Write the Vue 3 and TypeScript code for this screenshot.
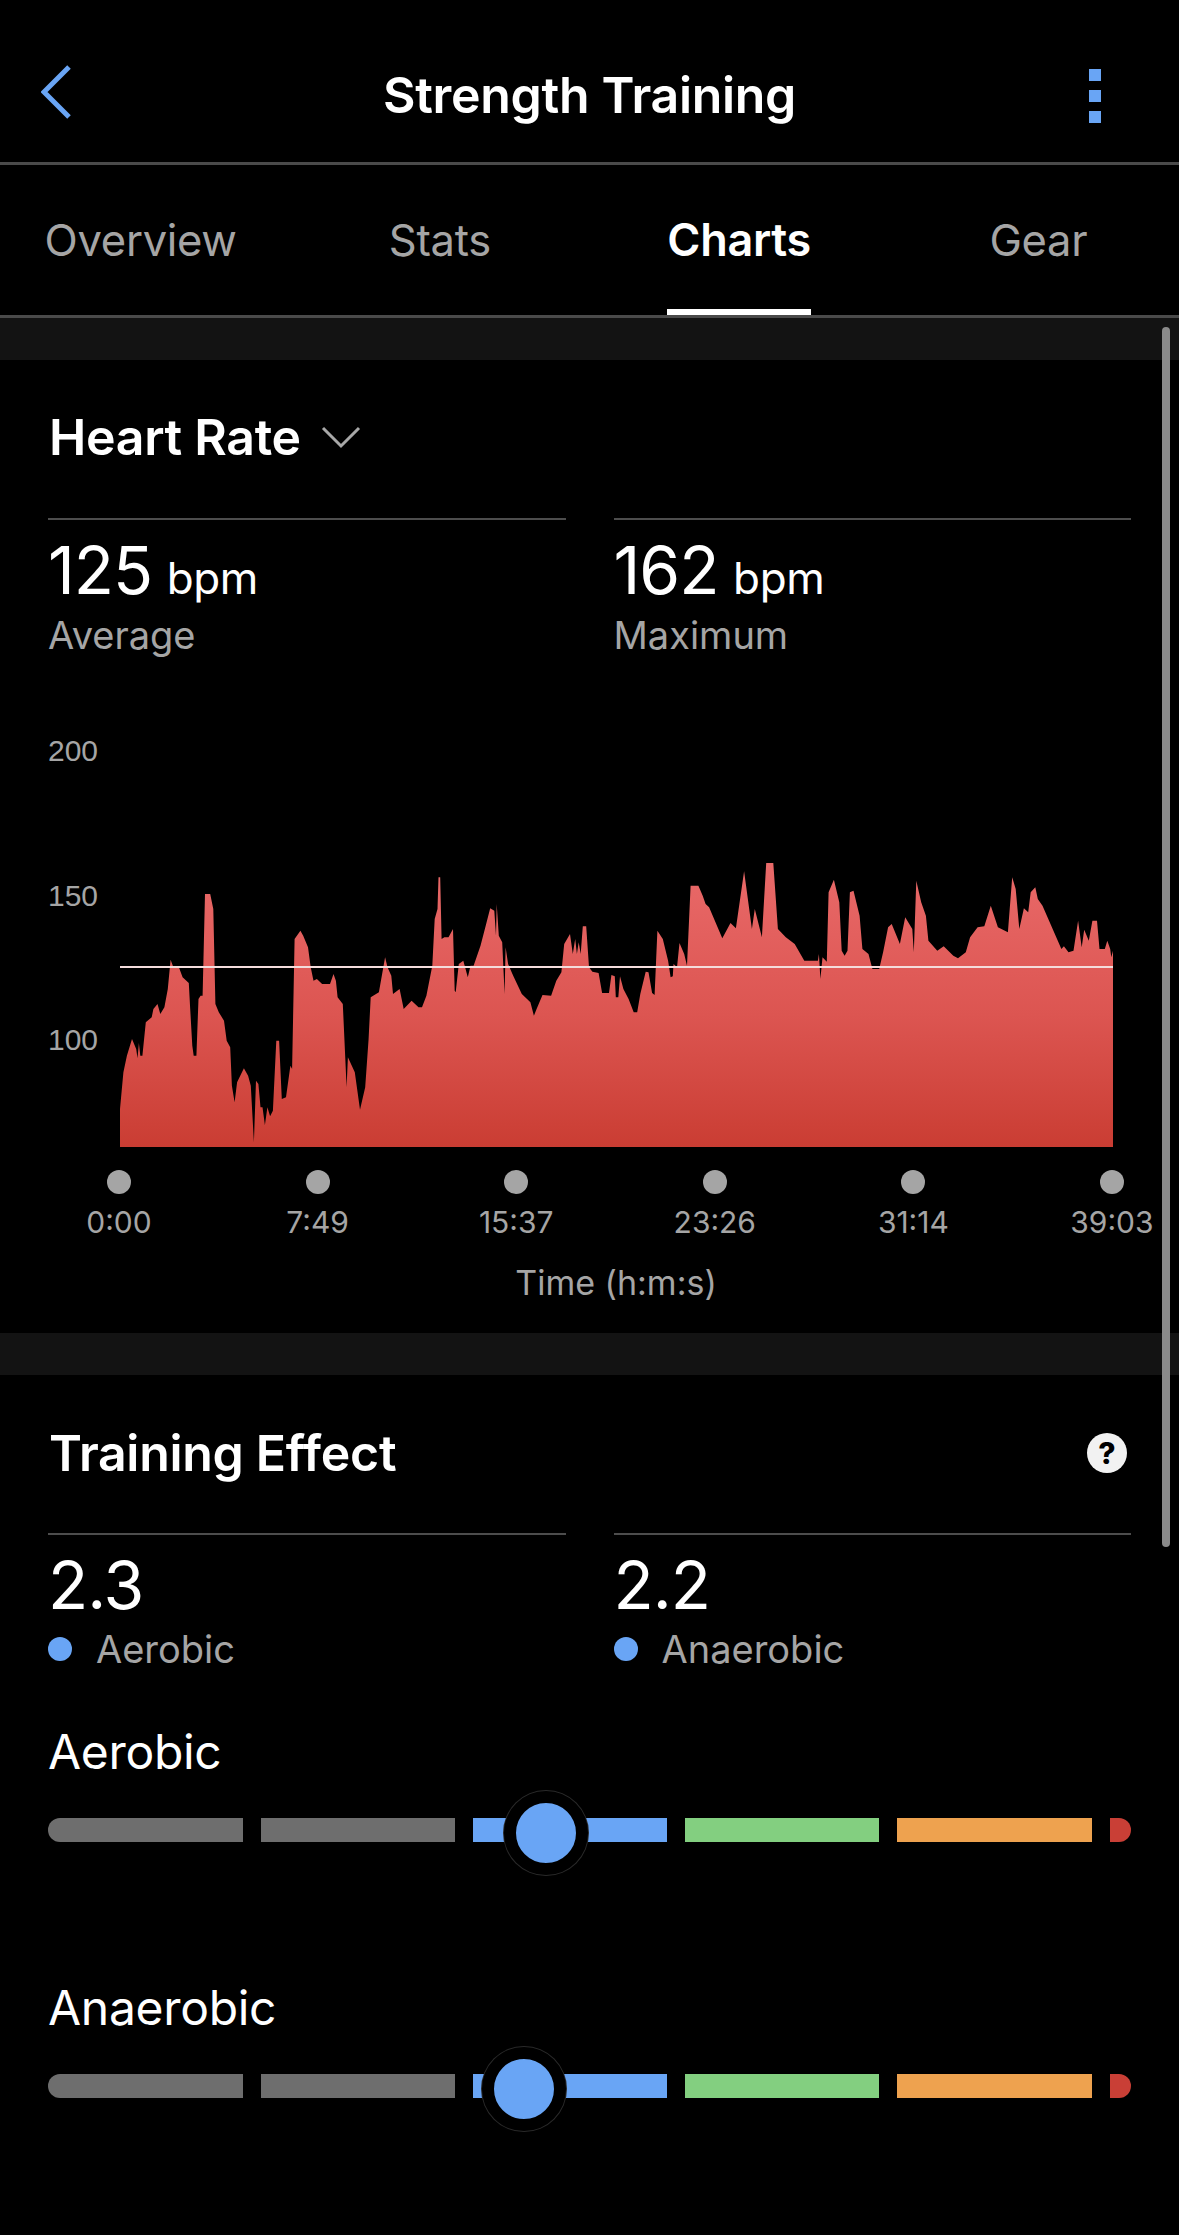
<script setup lang="ts">
type Zone = { color: string; width: number }

const TOP = 735
const BASE = 1148
const LEFT = 120

// outline traced from the chart: first run is x = 100 + zx / 2.904, second x = 620 + zx / 2.805
const runA: number[] = [
  58,810, 68,700, 78,650, 93,600, 105,630, 109,658, 113,612, 117,650, 123,650, 133,550, 150,535, 155,510,
  167,495, 175,525, 187,505, 197,450, 205,362, 212,382, 228,382, 240,415, 258,432, 262,510, 268,620, 272,650,
  280,650, 286,480, 292,470, 298,470, 305,165, 320,165, 329,210, 335,495, 345,520, 360,545, 368,605, 378,625,
  383,740, 391,790, 398,730, 418,688, 430,710, 438,740, 447,910, 453,725, 460,735, 466,805, 472,805, 479,858,
  486,805, 494,832, 502,815, 512,605, 520,605, 528,780, 540,775, 553,680, 558,690, 565,300, 582,275, 590,290,
  604,325, 612,385, 620,425, 630,420, 645,435, 668,435, 678,405, 685,425, 690,475, 705,495, 716,745, 720,655,
  740,700, 755,812, 770,745, 780,600, 786,475, 810,460, 828,355, 835,385, 846,410, 851,465, 870,450, 882,510,
  905,485, 925,505, 935,505, 948,470, 965,380, 972,240, 980,210, 983,115, 988,115, 992,300, 1000,295, 1012,295,
  1025,270, 1030,455, 1033,460, 1042,375, 1055,365, 1068,415, 1076,380, 1085,380, 1105,320, 1120,260, 1133,208,
  1145,215, 1150,290, 1152,195, 1158,290, 1168,310, 1172,400, 1175,465, 1178,325, 1185,375, 1200,410, 1225,465,
  1250,490, 1260,530, 1268,510, 1285,468, 1310,470, 1325,425, 1340,400, 1348,315, 1365,285, 1373,345, 1380,300,
  1385,345, 1390,310, 1396,345, 1402,262, 1412,262, 1420,385, 1430,398, 1448,402, 1458,462, 1478,462, 1485,408,
  1495,412, 1498,475, 1505,475, 1510,412, 1520,450, 1535,480, 1550,520, 1560,520,
]
const runB: number[] = [
  57,465, 72,398, 80,400, 90,462, 97,468, 105,275, 120,300, 135,365, 142,415, 148,412, 150,375, 160,385, 167,312,
  180,345, 188,380, 198,140, 220,140, 232,170, 240,195, 250,205, 287,298, 310,252, 325,268, 348,97, 370,270,
  378,210, 398,295, 410,72, 430,72, 443,270, 465,295, 490,315, 517,365, 555,365, 558,345, 562,420, 568,355,
  580,368, 585,160, 600,122, 615,190, 622,335, 630,350, 638,335, 645,160, 655,155, 672,230, 680,330, 697,345,
  708,390, 727,390, 738,340, 752,265, 762,255, 785,315, 800,235, 820,270, 824,340, 831,125, 845,190, 858,230,
  865,305, 890,335, 908,322, 935,350, 948,358, 970,340, 982,295, 1003,265, 1022,262, 1040,200, 1060,265, 1088,280,
  1100,115, 1110,150, 1120,270, 1133,208, 1145,220, 1152,160, 1165,145, 1172,180, 1185,200, 1238,330, 1245,322,
  1258,340, 1272,335, 1285,245, 1295,325, 1302,272, 1315,305, 1325,245, 1338,245, 1345,330, 1360,330, 1367,305,
  1375,330, 1378,355, 1383,335,
]

function trace(run: number[], origin: number, scale: number): string[] {
  const out: string[] = []
  for (let i = 0; i < run.length; i += 2) {
    const x = origin + run[i] / scale - LEFT
    const y = 840 + run[i + 1] / 3 - TOP
    out.push(`${x.toFixed(1)},${y.toFixed(1)}`)
  }
  return out
}

const chartH = BASE - TOP
const points = [...trace(runA, 100, 2.904), ...trace(runB, 620, 2.805)]
const area = `M0,${chartH} L${points.join(' L')} L993,${chartH} Z`
const avgY = 968 - TOP

const ticks = ['0:00', '7:49', '15:37', '23:26', '31:14', '39:03']
const yLabels = ['200', '150', '100']
const tabs = ['Overview', 'Stats', 'Charts', 'Gear']

const zones: Zone[] = [
  { color: '#6e6e6e', width: 194.5 },
  { color: '#6e6e6e', width: 194.5 },
  { color: '#69a5f5', width: 194 },
  { color: '#83cf80', width: 194 },
  { color: '#eea24f', width: 195 },
  { color: '#c93f36', width: 21 },
]
const gauges = [
  { label: 'Aerobic', thumb: 498 },
  { label: 'Anaerobic', thumb: 476 },
]
</script>

<template>
  <div class="screen">
    <header class="topbar">
      <svg class="back" width="30" height="54" viewBox="0 0 30 54" fill="none">
        <path d="M28 2 L3 27 L28 52" stroke="#69a5f5" stroke-width="5" />
      </svg>
      <h1>Strength Training</h1>
      <div class="kebab"><i></i><i></i><i></i></div>
    </header>

    <nav class="tabs">
      <div v-for="t in tabs" :key="t" class="tab" :class="{ active: t === 'Charts' }">
        <span>{{ t }}</span>
      </div>
    </nav>

    <div class="band"></div>

    <section class="hr">
      <div class="title-row">
        <h2>Heart Rate</h2>
        <svg width="40" height="24" viewBox="0 0 40 24" fill="none">
          <path d="M2 3 L20 21 L38 3" stroke="#a8a8a8" stroke-width="3" />
        </svg>
      </div>

      <div class="stats">
        <div class="stat">
          <div class="value">125 <small>bpm</small></div>
          <div class="caption">Average</div>
        </div>
        <div class="stat">
          <div class="value">162 <small>bpm</small></div>
          <div class="caption">Maximum</div>
        </div>
      </div>

      <div class="plot">
        <div class="yaxis">
          <span v-for="y in yLabels" :key="y">{{ y }}</span>
        </div>
        <svg :width="993" :height="chartH" :viewBox="`0 0 993 ${chartH}`">
          <defs>
            <linearGradient id="hrFill" x1="0" y1="120" x2="0" :y2="chartH" gradientUnits="userSpaceOnUse">
              <stop offset="0" stop-color="#ea6b6b" />
              <stop offset="0.55" stop-color="#dc5551" />
              <stop offset="1" stop-color="#ca3d33" />
            </linearGradient>
          </defs>
          <path :d="area" fill="url(#hrFill)" />
          <line x1="0" x2="993" :y1="avgY" :y2="avgY" stroke="#f4dcdc" stroke-width="2" />
        </svg>
      </div>

      <div class="xaxis">
        <div v-for="t in ticks" :key="t" class="tick">
          <i></i>
          <span>{{ t }}</span>
        </div>
      </div>
      <div class="axis-title">Time (h:m:s)</div>
    </section>

    <div class="band"></div>

    <section class="te">
      <div class="title-row between">
        <h2>Training Effect</h2>
        <span class="help">?</span>
      </div>

      <div class="stats effect">
        <div class="stat">
          <div class="value">2.3</div>
          <div class="caption dot">Aerobic</div>
        </div>
        <div class="stat">
          <div class="value">2.2</div>
          <div class="caption dot">Anaerobic</div>
        </div>
      </div>

      <div v-for="g in gauges" :key="g.label" class="gauge">
        <div class="gauge-label">{{ g.label }}</div>
        <div class="track">
          <div
            v-for="(z, i) in zones"
            :key="i"
            class="zone"
            :style="{ background: z.color, width: z.width + 'px' }"
          ></div>
          <div class="thumb" :style="{ left: g.thumb + 'px' }"></div>
        </div>
      </div>
    </section>

    <div class="scrollbar"></div>
  </div>
</template>

<style scoped>
.screen {
  position: relative;
  width: 1179px;
  height: 2235px;
  overflow: hidden;
  background: #000;
  color: #fff;
  font-family: Inter, "Liberation Sans", sans-serif;
}
.topbar {
  height: 162px;
  box-sizing: border-box;
  display: flex;
  align-items: center;
  justify-content: space-between;
  padding: 30px 78px 0 41px;
  position: relative;
}
.topbar h1 {
  position: absolute;
  left: 0;
  right: 0;
  top: 66px;
  margin: 0;
  text-align: center;
  font-size: 50px;
  line-height: 58px;
  font-weight: 600;
  letter-spacing: -0.3px;
}
.back {
  margin-top: -8px;
}
.kebab {
  display: flex;
  flex-direction: column;
  gap: 9px;
}
.kebab i {
  display: block;
  width: 12px;
  height: 12px;
  background: #69a5f5;
}
.tabs {
  height: 156px;
  box-sizing: border-box;
  border-top: 3px solid #4a4a4a;
  border-bottom: 3px solid #4a4a4a;
  display: flex;
  margin: 0 -9px;
}
.tab {
  flex: 1;
  display: flex;
  align-items: flex-start;
  justify-content: center;
  padding-top: 48px;
  font-size: 43.5px;
  line-height: 54px;
  letter-spacing: -0.3px;
  color: #a5a5a5;
  box-sizing: border-box;
}
.tab span {
  display: block;
  height: 96px;
}
.tab.active {
  color: #fff;
  font-weight: 600;
  font-size: 45px;
}
.tab.active span {
  border-bottom: 6px solid #fff;
}
.band {
  height: 42px;
  background: #131313;
}
.hr {
  height: 973px;
  box-sizing: border-box;
  padding-top: 49px;
}
.te {
  padding-top: 50px;
}
.title-row {
  display: flex;
  align-items: center;
  gap: 20px;
  padding-left: 49px;
  height: 56px;
}
.title-row.between {
  justify-content: space-between;
  padding-right: 52px;
}
h2 {
  margin: 0;
  font-size: 50px;
  line-height: 56px;
  font-weight: 600;
  letter-spacing: -0.3px;
}
.help {
  width: 40px;
  height: 40px;
  border-radius: 50%;
  background: #f2f2f2;
  color: #000;
  font-size: 30px;
  line-height: 40px;
  font-weight: 800;
  text-align: center;
}
.stats {
  display: flex;
  gap: 48px;
  margin: 53px 48px 0 48px;
}
.stats.effect {
  margin-top: 52px;
  margin-bottom: 52px;
}
.stat {
  flex: 1;
  border-top: 2px solid #4d4d4d;
  padding-top: 12px;
}
.value {
  font-size: 66px;
  line-height: 76px;
  letter-spacing: -1px;
  word-spacing: -3px;
}
.value small {
  font-size: 44px;
  letter-spacing: -0.4px;
}
.caption {
  font-size: 38px;
  line-height: 44px;
  color: #a5a5a5;
  margin-top: -3px;
}
.caption.dot {
  display: flex;
  align-items: center;
  gap: 24px;
  margin-top: 4px;
}
.caption.dot::before {
  content: "";
  width: 24px;
  height: 24px;
  border-radius: 50%;
  background: #69a5f5;
}
.plot {
  display: flex;
  margin-top: 77px;
}
.yaxis {
  width: 120px;
  box-sizing: border-box;
  padding-left: 48px;
  display: flex;
  flex-direction: column;
  font-family: "Liberation Sans", sans-serif;
  font-size: 30px;
  color: #a5a5a5;
}
.yaxis span {
  height: 144.5px;
  line-height: 34px;
}
.plot svg {
  display: block;
}
.xaxis {
  display: flex;
  margin: 2px 0 0 69px;
  width: 1093px;
  justify-content: space-between;
}
.tick {
  width: 100px;
  display: flex;
  flex-direction: column;
  align-items: center;
  font-size: 30px;
  line-height: 36px;
  color: #a5a5a5;
}
.tick i {
  display: block;
  width: 24px;
  height: 24px;
  border-radius: 50%;
  background: #a5a5a5;
  margin-bottom: 10px;
}
.axis-title {
  margin-top: 22px;
  padding-left: 53px;
  text-align: center;
  font-size: 34px;
  line-height: 42px;
  color: #a5a5a5;
}
.gauge {
  padding: 0 48px;
  height: 256px;
}
.gauge-label {
  font-size: 48px;
  line-height: 58px;
  letter-spacing: -0.3px;
}
.track {
  position: relative;
  display: flex;
  justify-content: space-between;
  margin-top: 37px;
  height: 24px;
}
.zone {
  height: 24px;
}
.zone:first-child {
  border-radius: 12px 0 0 12px;
}
.zone:nth-child(6) {
  border-radius: 0 12px 12px 0;
}
.thumb {
  position: absolute;
  top: -27px;
  box-sizing: border-box;
  width: 84px;
  height: 84px;
  margin-left: -42px;
  border-radius: 50%;
  background: #69a5f5;
  border: 12px solid #000;
  box-shadow: 0 0 0 1px #2a2a2a;
}
.scrollbar {
  position: absolute;
  left: 1162px;
  top: 327px;
  width: 8px;
  height: 1220px;
  border-radius: 4px;
  background: #8a8a8a;
}
</style>

<style>
html,
body {
  background: #000;
}
</style>
